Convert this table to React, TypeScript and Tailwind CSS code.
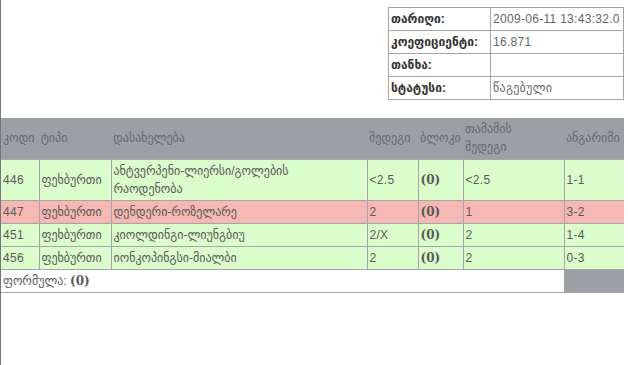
import React from "react";

type Bet = {
  code: string;
  sport: string;
  name: React.ReactNode;
  pick: string;
  block: string;
  result: string;
  score: string;
  lost?: boolean;
};

const bets: Bet[] = [
  {
    code: "446",
    sport: "ფეხბურთი",
    name: (
      <>
        ანტვერპენი-ლიერსი/გოლების
        <br />
        რაოდენობა
      </>
    ),
    pick: "<2.5",
    block: "(0)",
    result: "<2.5",
    score: "1-1",
  },
  { code: "447", sport: "ფეხბურთი", name: "დენდერი-როზელარე", pick: "2", block: "(0)", result: "1", score: "3-2", lost: true },
  { code: "451", sport: "ფეხბურთი", name: "კიოლდინგი-ლიუნგბიუ", pick: "2/X", block: "(0)", result: "2", score: "1-4" },
  { code: "456", sport: "ფეხბურთი", name: "იონკოპინგსი-მიალბი", pick: "2", block: "(0)", result: "2", score: "0-3" },
];

const info = [
  { label: "თარიღი:", value: "2009-06-11 13:43:32.0" },
  { label: "კოეფიციენტი:", value: "16.871" },
  { label: "თანხა:", value: "" },
  { label: "სტატუსი:", value: "წაგებული" },
];

const td = "border border-[#a2a6aa] px-[2px] py-[2px] align-middle";
const ka = "tracking-normal";
const bold = "font-['DejaVu_Serif',serif] text-[12px] leading-[18px] font-bold tracking-normal";

export default function App() {
  return (
    <div className="min-h-[365px] border-l border-[#6e7880] bg-white font-['Liberation_Sans','DejaVu_Sans',sans-serif] text-[12px] leading-[18px] tracking-[0.3px] text-[#5a5a5a]">
      {/* ticket summary */}
      <div className="flex justify-end pt-[7px] pr-[4px]">
        <table className="w-[236px] border-collapse">
          <tbody>
            {info.map((r) => (
              <tr key={r.label} className="h-[23px]">
                <td className={`${td} w-[102px] font-bold tracking-normal text-[#333]`}>{r.label}</td>
                <td className={`${td} text-[#666]`}>{r.value}</td>
              </tr>
            ))}
          </tbody>
        </table>
      </div>

      {/* bet lines */}
      <table className="mt-[18px] w-[623px] border-collapse">
        <thead>
          <tr className="h-[41px] bg-[#9ca0a4] text-left tracking-normal text-[#64696d]">
            <th className="w-[38px] px-[2px] font-normal">კოდი</th>
            <th className="w-[72px] px-[2px] font-normal">ტიპი</th>
            <th className="w-[256px] px-[2px] font-normal">დასახელება</th>
            <th className="w-[51px] px-[2px] font-normal">შედეგი</th>
            <th className="w-[45px] px-[2px] font-normal">ბლოკი</th>
            <th className="w-[101px] px-[2px] font-normal">
              თამაშის
              <br />
              შედეგი
            </th>
            <th className="px-[2px] font-normal">ანგარიში</th>
          </tr>
        </thead>
        <tbody>
          {bets.map((b) => (
            <tr key={b.code} className={b.lost ? "bg-[#f5b8b3]" : "bg-[#dbfccb]"}>
              <td className={`${td} border-l-0`}>{b.code}</td>
              <td className={`${td} ${ka}`}>{b.sport}</td>
              <td className={`${td} ${ka}`}>{b.name}</td>
              <td className={td}>{b.pick}</td>
              <td className={td}>
                <span className={bold}>{b.block}</span>
              </td>
              <td className={td}>{b.result}</td>
              <td className={`${td} border-r-0`}>{b.score}</td>
            </tr>
          ))}
          <tr className="h-[23px]">
            <td colSpan={6} className={`${td} ${ka} border-l-0`}>
              ფორმულა: <span className={bold}>(0)</span>
            </td>
            <td className="border border-[#a2a6aa] border-r-0 bg-[#9ca0a4]" />
          </tr>
        </tbody>
      </table>
    </div>
  );
}
